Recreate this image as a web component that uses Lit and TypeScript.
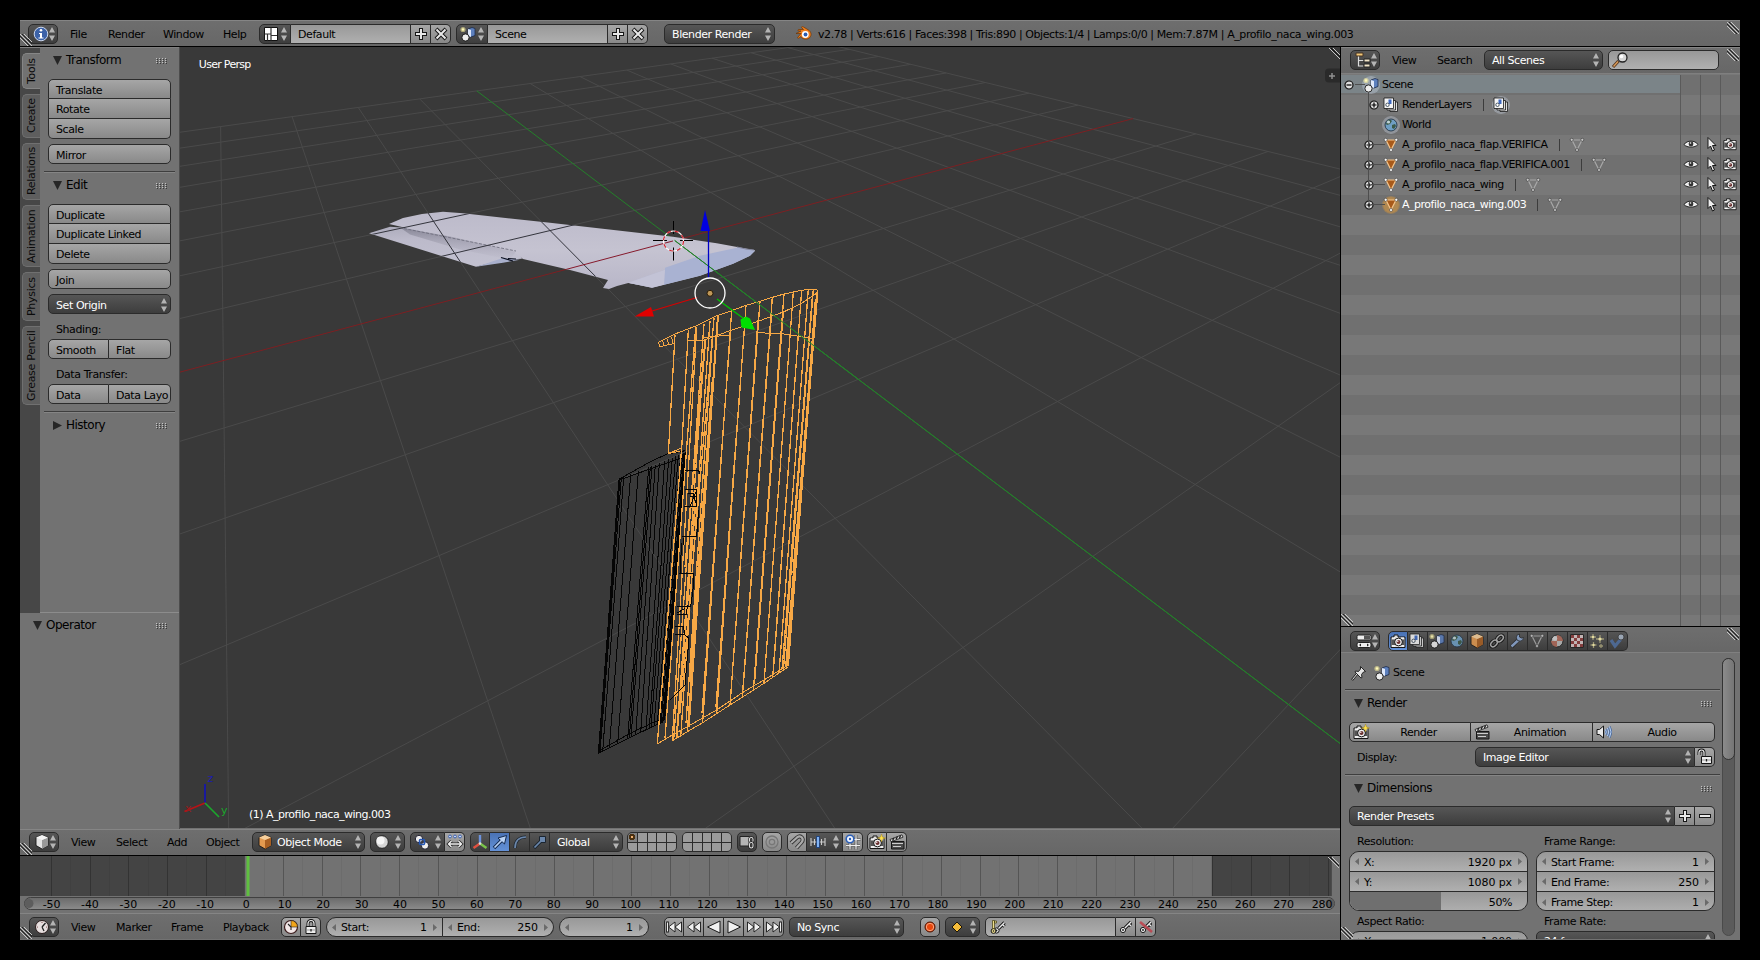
import { LitElement, html, svg, css, unsafeCSS, nothing } from "lit";
import { customElement } from "lit/decorators.js";
import { classMap } from "lit/directives/class-map.js";

/* ---------- icons, drawn on a 16 x 16 grid ---------- */
const K = "#161616";
const W = "#e8e8e8";
const camera = svg`<path d="M1 4h3V2h4v2h7v10.500H1z" fill="#e0e0e0" stroke=${K}/><path d="M1.500 6.500h13v5.500h-13z" fill="#555"/><circle cx="8.500" cy="9" r="3.900" fill="#f2f2f2" stroke=${K}/><circle cx="8.500" cy="9" r="2" fill="#6a3030"/><circle cx="7.800" cy="8.300" r=".7" fill="#fff"/><path d="M2 5h3M11 5h3M2 13h3M12 13h2" stroke="#fff"/>`;
const star = svg`<path d="M12.500 0l1 3 3 1-3 1-1 3-1-3-3-1 3-1z" fill="#ffe14a" stroke="#9a7a10" stroke-width=".4"/>`;
const clapper = svg`<path d="M2.500 7.500h12.500v7.500h-12.500z" fill="#4a4a4a" stroke=${K}/><path d="M1 5.500L13 .8l1 2.400L2 7.700z" fill="#ddd" stroke=${K} stroke-width=".8"/><path d="M3.500 6.500l1.500-2.500M7 5.200L8.500 2.500M10.500 4l1-2.500" stroke=${K} stroke-width="1.300"/><path d="M3 9.500h11M4 12.500h8" stroke="#ccc"/>`;
const sceneIcon = svg`<path d="M8 3l4-1.500 3 1v7l-4 1.500-3-1z" fill="#5d80bd" stroke="#1c2a48" stroke-width=".8"/><path d="M8 3l3 1v7l-3-1z" fill="#dfe8fa"/><circle cx="5.500" cy="11.500" r="3.600" fill="#eee" stroke=${K} stroke-width=".9"/><circle cx="3" cy="3.500" r="2.600" fill="#fff6a0" opacity=".55"/><circle cx="3" cy="3.500" r="1.200" fill="#fff9b8"/>`;
const layersIcon = svg`<path d="M6 5h8.500v9.500H7z" fill="#ddd" stroke=${K} stroke-width=".8"/><path d="M4 3.500h8.500v9.500H4z" fill="#ddd" stroke=${K} stroke-width=".8"/><path d="M1 1h9.500v10.500H1z" fill="#f4f4f4" stroke=${K} stroke-width=".8"/><path d="M5.500 2.500h3v4.500h-3z" fill="#3d68c0"/><circle cx="4.500" cy="7.800" r="1.700" fill="#fff" stroke="#234" stroke-width=".8"/>`;
const world = svg`<circle cx="8" cy="8" r="6" fill="#6f9fc4" stroke="#234" stroke-width=".9"/><path d="M4 4c2-2 4-1 5 0l-2 3-3 1-1-1zM9 8l3-1 1 2-2 3-2-1z" fill="#3c5a48"/><circle cx="5.500" cy="5" r="1.600" fill="#e4f2fb" opacity=".8"/>`;
const mesh = (fill: string, stroke: string, dot: string) => svg`<path d="M3 3h10L8 13z" fill=${fill} stroke=${stroke} stroke-width="1.200"/><g fill=${dot} stroke="#222" stroke-width=".5"><circle cx="2.700" cy="2.800" r="1.500"/><circle cx="13.300" cy="2.800" r="1.500"/><circle cx="8" cy="13" r="1.500"/></g>`;
const key = svg`<circle cx="5" cy="11" r="2.600" fill="#eee" stroke=${K}/><circle cx="5" cy="11" r=".9" fill=${K}/><path d="M7 9l6-6M11 5l2 2" stroke=${K} stroke-width="3.200"/><path d="M7 9l6-6M11 5l2 2" stroke="#eee" stroke-width="1.400"/>`;
const cube = (a: string, b: string, c: string) => svg`<path d="M8 1l6 2.500v8L8 15l-6-3.500v-8z" fill=${a} stroke=${K} stroke-width=".9"/><path d="M8 6l6-2.500v8L8 15z" fill=${b}/><path d="M8 1l6 2.500L8 6 2 3.500z" fill=${c}/>`;
const tri = (x: number, d: number) => svg`<path d=${d > 0 ? `M${x} 3l6.500 5-6.500 5z` : `M${x} 3l-6.500 5 6.500 5z`} fill="#f0f0f0" stroke=${K} stroke-width=".9"/>`;

const ICONS: Record<string, unknown> = {
  info: svg`<circle cx="8" cy="8" r="6.800" fill="#3c62a8" stroke="#cdd8ee" stroke-width="1"/><circle cx="8" cy="4.300" r="1.300" fill="#fff"/><path d="M6 7h3v4.500h1.500v1h-5v-1H7V8H6z" fill="#fff"/>`,
  layout: svg`<path d="M1.500 1.500h13v13h-13z" fill="#fff" stroke="#111"/><path d="M1.500 8h6M8 1.500v13M4.500 8v6.500M14 9.500h-6" stroke="#333" stroke-width="1.200"/>`,
  scene: sceneIcon,
  plus: svg`<path d="M8 2v12M2 8h12" stroke=${K} stroke-width="4"/><path d="M8 3v10M3 8h10" stroke=${W} stroke-width="2"/>`,
  minus: svg`<path d="M2 8h12" stroke=${K} stroke-width="4"/><path d="M3 8h10" stroke=${W} stroke-width="2"/>`,
  cross: svg`<path d="M3 3l10 10M13 3L3 13" stroke=${K} stroke-width="4"/><path d="M3.500 3.500l9 9M12.500 3.500l-9 9" stroke=${W} stroke-width="2"/>`,
  blender: svg`<path d="M1 7.500h5l-3 3.500c-1 1 0 1.500 1 1l2-1.500c1 3 7.500 4 9.500 0 1.500-3-.5-5.500-2-6.500L8.500 1C7 0 6 1 7 2l1.500 1.500H4c-1.500 0-1.500 1.500 0 1.500h2L1 7.500z" fill="#ee7d1a" stroke="#6b3404" stroke-width=".7"/><circle cx="10.300" cy="8.500" r="3.400" fill="#fff"/><circle cx="10.500" cy="8.500" r="1.900" fill="#2b5cb0"/>`,
  outliner: svg`<path d="M1 1h7v3H1z" fill="#f3c878" stroke="#432"/><path d="M3.500 4.500v9.500h5M3.500 8.500h5" fill="none" stroke="#ddd" stroke-width="1.200"/><path d="M9 7h6v3H9zM9 12h6v3H9z" fill="#f0e4c8" stroke="#222"/>`,
  lens: svg`<path d="M1 15l5.500-6" stroke="#53351d" stroke-width="3.200"/><path d="M1.500 14.500l4.500-5" stroke="#d99a5a" stroke-width="1.400"/><circle cx="10.500" cy="5.500" r="4.500" fill="#e4e4e4" fill-opacity=".8" stroke="#222" stroke-width="1.300"/><circle cx="9.500" cy="4.500" r="1.800" fill="#fff"/>`,
  layers: layersIcon,
  world,
  object: mesh("#a85a1a", "#f3c48a", "#fff"),
  mesh: mesh("none", "#a8a8a8", "#c8c8c8"),
  eye: svg`<path d="M1 8.500C4 4 12 4 15 8.500 12 12 4 12 1 8.500z" fill="#eee" stroke=${K} stroke-width=".9"/><circle cx="8" cy="8" r="2.400" fill="#333"/><circle cx="7.500" cy="7" r=".8" fill="#fff"/>`,
  pointer: svg`<path d="M5 1.500v11l2.500-2.500 2 5 2-1-2-4.500h3.500z" fill="#eee" stroke=${K}/>`,
  camera,
  camerastar: svg`${camera}${star}`,
  clapper,
  props: svg`<rect x="1" y="2" width="14" height="5" rx="1.500" fill="#eee" stroke="#222"/><path d="M8 2.500h6v4H8z" fill="#555"/><rect x="1" y="9.500" width="14" height="5" rx="1.500" fill="#eee" stroke="#222"/><path d="M5 10.500L3 12l2 1.500zM11 10.500l2 1.500-2 1.500z" fill="#222"/>`,
  cube: cube("#e39a50", "#a85f22", "#f6cf9c"),
  cubegrey: cube("#e4e4e4", "#999", "#f5f5f5"),
  chain: svg`<g fill="none" stroke="#111" stroke-width="3.400"><ellipse cx="5" cy="10.500" rx="3.800" ry="2.600" transform="rotate(-45 5 10.500)"/><ellipse cx="11" cy="5.500" rx="3.800" ry="2.600" transform="rotate(-45 11 5.500)"/></g><g fill="none" stroke="#b4b4b4" stroke-width="1.500"><ellipse cx="5" cy="10.500" rx="3.800" ry="2.600" transform="rotate(-45 5 10.500)"/><ellipse cx="11" cy="5.500" rx="3.800" ry="2.600" transform="rotate(-45 11 5.500)"/></g>`,
  wrench: svg`<path d="M2.500 14L9 7" stroke="#222" stroke-width="4"/><path d="M2.500 13.500L9.500 7" stroke="#8ba6d0" stroke-width="2.400"/><path d="M14.500 4.500a3.600 3.600 0 1 1-4-3.500v3l2 1z" fill="#8ba6d0" stroke="#222" stroke-width=".8"/>`,
  material: svg`<circle cx="8" cy="8" r="6" fill="#b9b9b9" stroke="#222"/><path d="M8 8V2a6 6 0 0 1 6 6zM8 8v6a6 6 0 0 1-6-6z" fill="#b06a5a"/><circle cx="6" cy="5.500" r="2.200" fill="#ddd" opacity=".8"/>`,
  texture: svg`<path d="M1.500 1.500h13v13h-13z" fill="#d6c8c8" stroke="#222"/><path d="M2 2h3v3H2zM8 2h3v3H8zM5 5h3v3H5zM11 5h3v3h-3zM2 8h3v3H2zM8 8h3v3H8zM5 11h3v3H5zM11 11h3v3h-3z" fill="#8e3c3c"/>`,
  particles: svg`<path d="M4 1v6M1 4h6M11 2v8M7 6h8M4.500 9v6M1.500 12h6M12 11v4M10 13h4" stroke="#a9a47c" stroke-width="1.300"/><circle cx="4" cy="4" r="1.300" fill="#fff4b0"/><circle cx="11" cy="6" r="1.600" fill="#fff4b0"/><circle cx="4.500" cy="12" r="1.200" fill="#fff4b0"/>`,
  physics: svg`<path d="M2 7l4 6 6-7" fill="none" stroke="#4f6f9f" stroke-width="3.200"/><circle cx="12" cy="4" r="3" fill="#a9b6c6" stroke="#333" stroke-width=".8"/>`,
  pin: svg`<path d="M1 15l5-6" stroke="#222" stroke-width="2.400"/><path d="M1.500 14.500L6 9" stroke="#eee"/><path d="M9.500 1.500l5 5-2 .5-2 2.500.5 3-1 .5-6-6 .5-1 3 .5L9.500 4z" fill="#e4e4e4" stroke=${K} stroke-width=".9"/>`,
  speaker: svg`<path d="M1 5.500h2.500l4-3.500v12l-4-3.500H1z" fill="#e8e8e8" stroke=${K}/><g fill="none" stroke="#3c5f98" stroke-width="2"><path d="M9.500 5.500q1.500 2.500 0 5M11.500 4q2.500 4 0 8M13.500 2.500q3 5.500 0 11"/></g><g fill="none" stroke="#c0d8f8" stroke-width="1"><path d="M9.500 5.500q1.500 2.500 0 5M11.500 4q2.500 4 0 8M13.500 2.500q3 5.500 0 11"/></g>`,
  unlock: svg`<path d="M2 6V3.500a2.500 2.500 0 0 1 5 0V8" fill="none" stroke=${K} stroke-width="3"/><path d="M2 6V3.500a2.500 2.500 0 0 1 5 0V8" fill="none" stroke="#eee" stroke-width="1.200"/><path d="M4.500 7.500h10v7h-10z" fill="#eee" stroke=${K}/><path d="M5 11h9" stroke="#999"/><path d="M9.500 10v2.500" stroke="#222" stroke-width="1.300"/>`,
  lock: svg`<path d="M5 8V4.500a3 3 0 0 1 6 0V8" fill="none" stroke=${K} stroke-width="3"/><path d="M5 8V4.500a3 3 0 0 1 6 0V8" fill="none" stroke="#eee" stroke-width="1.200"/><path d="M3 7.500h10v7H3z" fill="#eee" stroke=${K}/><path d="M3.500 11h9" stroke="#999"/><path d="M8 10v2.500" stroke="#222" stroke-width="1.300"/>`,
  sphere: svg`<circle cx="8" cy="8" r="6.300" fill="#d5d5d5" stroke="#1a1a1a" stroke-width=".9"/><circle cx="6.500" cy="6.500" r="4" fill="#f5f5f5"/>`,
  pivot: svg`<circle cx="5" cy="5" r="3.700" fill="#eee" stroke="#112" stroke-width=".9"/><circle cx="11" cy="11.500" r="3.700" fill="#eee" stroke="#112" stroke-width=".9"/><rect x="5.500" y="5.500" width="5" height="5" rx="1" fill="none" stroke="#2456b5" stroke-width="1.600"/>`,
  manip: svg`<path d="M1.500 10h13M4.500 7l-3 3 3 3M11.500 7l3 3-3 3" fill="none" stroke="#222" stroke-width="3"/><path d="M1.500 10h13M4.500 7l-3 3 3 3M11.500 7l3 3-3 3" fill="none" stroke="#f2f2f2" stroke-width="1.400"/><g fill="#dde6fa" stroke="#2a55ad" stroke-width=".9"><circle cx="3" cy="2.500" r="1.400"/><circle cx="8" cy="2.500" r="1.400"/><circle cx="13" cy="2.500" r="1.400"/></g>`,
  axes: svg`<path d="M8 9.500V1" stroke="#6d93dd" stroke-width="2.400"/><path d="M8 9.500L1.500 14" stroke="#e05040" stroke-width="2.400"/><path d="M8 9.500l6.500 4.500" stroke="#7ac44a" stroke-width="2.400"/><circle cx="8" cy="9.500" r="1.300" fill="#ddd"/>`,
  arrow: svg`<path d="M2 14l7-7" stroke="#12284e" stroke-width="3.600"/><path d="M14.500 1.500l-2 8.500L6 4z" fill="#b9d2f5" stroke="#12284e"/><path d="M2.500 13.500L10 6" stroke="#b9d2f5" stroke-width="1.700"/>`,
  arc: svg`<path d="M3 14C3 7 7 3 14 3" fill="none" stroke="#1c2530" stroke-width="3.200"/><path d="M3 14C3 7 7 3 14 3" fill="none" stroke="#6b87ab" stroke-width="1.700"/>`,
  scale: svg`<path d="M2 14l7-7" stroke="#1c2530" stroke-width="3.400"/><path d="M7.500 2.500h6v6h-6z" fill="#6b87ab" stroke="#1c2530"/><path d="M2.500 13.500L9 7" stroke="#6b87ab" stroke-width="1.700"/>`,
  layerlock: svg`<path d="M1 2.500h9.500v9.500H1z" fill="#b4b4b4" stroke="#222"/><rect x="10.500" y="3.500" width="3.500" height="5" rx="1.700" fill="none" stroke="#222" stroke-width="2.400"/><rect x="10.500" y="3.500" width="3.500" height="5" rx="1.700" fill="none" stroke="#ddd" stroke-width="1.100"/><rect x="10.500" y="8.500" width="3.500" height="5.500" rx="1.700" fill="none" stroke="#222" stroke-width="2.400"/><rect x="10.500" y="8.500" width="3.500" height="5.500" rx="1.700" fill="none" stroke="#ddd" stroke-width="1.100"/>`,
  prop: svg`<circle cx="8" cy="8" r="6" fill="none" stroke="#777" stroke-width="1.300"/><circle cx="8" cy="8" r="2.700" fill="#999" stroke="#777" stroke-width="1.200"/>`,
  magnet: svg`<path d="M2 9l6-5.500c4-3 7.500 1.500 4.500 5L7.500 14" fill="none" stroke="#333" stroke-width="4"/><path d="M2 9l6-5.500c4-3 7.500 1.500 4.500 5L7.500 14" fill="none" stroke="#aaa" stroke-width="2.200"/>`,
  snapinc: svg`<path d="M1 4v8M4.500 5v6M11.500 5v6M15 4v8M1 8h14" stroke="#ccc" stroke-width="1.100"/><path d="M8 2v12" stroke="#1d4585" stroke-width="3.600"/><path d="M8 3v10" stroke="#8fc0ff" stroke-width="1.800"/>`,
  snaptarget: svg`<path d="M1 11.500h14M5 8v7.500M11 1v14.500M8 5.500h7.500" stroke="#333" stroke-width="2.600"/><path d="M1 11.500h14M5 8v7.500M11 1v14.500M8 5.500h7.500" stroke="#eee" stroke-width="1.300"/><circle cx="5" cy="5" r="3.800" fill="#f5f8ff" stroke="#2b5fb8" stroke-width="1.600"/><circle cx="5" cy="5" r="1.200" fill="#2b5fb8"/>`,
  clock: svg`<circle cx="8" cy="8" r="6.500" fill="#e6dede" stroke="#2a1c1c"/><path d="M8 8l3.500-4M8 8l2 4" stroke="#222" stroke-width="1.300"/><g fill="#744"><circle cx="3.500" cy="8" r=".6"/><circle cx="8" cy="3.500" r=".6"/><circle cx="12.500" cy="8" r=".6"/></g>`,
  clockpie: svg`<circle cx="8" cy="8" r="6.500" fill="#f2e6e6" stroke="#3a1c1c" stroke-width="1.200"/><path d="M8 8V1.500A6.500 6.500 0 0 1 14.500 8z" fill="#f2a51a" stroke="#222" stroke-width=".6"/><path d="M8 8l-3-3M8 8v3" stroke="#222" stroke-width="1.100"/>`,
  first: svg`<path d="M1.500 2.500v11" stroke=${K} stroke-width="2.600"/><path d="M1.500 3.500v9" stroke="#eee"/>${tri(9, -1)}${tri(15.5, -1)}`,
  prev: svg`${tri(8, -1)}${tri(14.5, -1)}`,
  back: svg`<path d="M14 2v12L1.500 8z" fill="#f0f0f0" stroke=${K}/>`,
  play: svg`<path d="M2 2v12l12.500-6z" fill="#f0f0f0" stroke=${K}/>`,
  next: svg`${tri(1.5, 1)}${tri(8, 1)}`,
  last: svg`<path d="M14.500 2.500v11" stroke=${K} stroke-width="2.600"/><path d="M14.500 3.500v9" stroke="#eee"/>${tri(0.5, 1)}${tri(7, 1)}`,
  record: svg`<circle cx="8" cy="8" r="5" fill="#d83c0c" stroke="#4a1404"/><circle cx="8" cy="8" r="3.700" fill="#e8480f" stroke="#ffb08a" stroke-width=".9"/>`,
  diamond: svg`<path d="M8 3L13 8 8 13 3 8z" fill="#f6bd3a" stroke="#1c1404"/>`,
  key,
  keyset: svg`<g transform="translate(2.500 .5)">${key}</g><circle cx="4.500" cy="12" r="2.400" fill="#efe08c" stroke=${K}/><path d="M3.500 1.500h2v8h-2zM5.500 2h2v2h-2z" fill="#efe08c" stroke="#443c10" stroke-width=".7"/><circle cx="4.500" cy="12" r=".8" fill=${K}/>`,
  keydel: svg`${key}<path d="M2 3l12 10" stroke="#c0404a" stroke-width="2.600" opacity=".85"/>`,
};
const icon = (name: string, cls = "") => html`<svg class="ic ${cls}" viewBox="0 0 16 16">${ICONS[name]}</svg>`;

/* ---------- shared styles ---------- */
const sizes = unsafeCSS(
  Array.from({ length: 480 }, (_, i) => `.w${i}{width:${i}px;flex:none}` + (i < 60 ? `.ml${i}{margin-left:${i}px}` : "")).join("")
);

const base = css`
  ${sizes}
  * { box-sizing: border-box; }
  .row { display: flex; }
  .ic { width: 16px; height: 16px; flex: none; display: block; overflow: visible; fill: none; }
  .b, .d, .f {
    height: 20px; border: 1px solid #2b2b2b; border-radius: 5px; display: flex; align-items: center;
    line-height: 16px; padding-top: 2px; overflow: hidden; white-space: nowrap;
  }
  .b > svg, .d > svg, .f > svg { margin-top: -2px; }
  .b { background: linear-gradient(#a6a6a6, #898989); color: #000; }
  .d { background: linear-gradient(#565656, #3d3d3d); color: #fff; }
  .f { background: linear-gradient(#989898, #b0b0b0); color: #000; }
  .c { justify-content: center; }
  .l { border-top-right-radius: 0; border-bottom-right-radius: 0; }
  .m { border-radius: 0; border-left-width: 0; }
  .r { border-top-left-radius: 0; border-bottom-left-radius: 0; border-left-width: 0; }
  .sel { background: linear-gradient(#4a72b4, #6391d8); }
  .ud { width: 6px; height: 14px; margin: 0 3px 0 auto; flex: none; fill: #b4b4b4; }
  .n { border-radius: 10px; padding: 2px 5px 0; }
  .n.l { border-radius: 10px 0 0 10px; }
  .n.r { border-radius: 0 10px 10px 0; }
  .n .v { margin-left: auto; margin-right: 6px; letter-spacing: -.1px; }
  .n .t { margin-left: 5px; }
  .ar { width: 4px; height: 7px; fill: #6a6a6a; flex: none; }
  .txt { padding-left: 7px; }
`;

const updown = () => html`<svg class="ud" viewBox="0 0 6 14"><path d="M3 0l3 5.500H0zM3 14l3-5.500H0z"/></svg>`;
const grip = () => html`<svg class="grip" width="12" height="7"><g fill="#c4c4c4">${[0, 3, 6, 9].map((x) => [0, 2, 4].map((y) => svg`<rect x=${x} y=${y} width="1" height="1"/>`))}</g><g fill="#3a3a3a">${[0, 3, 6, 9].map((x) => [0, 2, 4].map((y) => svg`<rect x=${x + 1} y=${y + 1} width="1" height="1"/>`))}</g></svg>`;
const num = (label: string, value: string, cls: string) => html`<div class="f n ${cls}">
  <svg class="ar" viewBox="0 0 4 7"><path d="M4 0v7L0 3.500z"/></svg><span class="t">${label}</span><span class="v">${value}</span>
  <svg class="ar" viewBox="0 0 4 7"><path d="M0 0v7l4-3.500z"/></svg></div>`;
const hatch = (cls: string) => html`<svg class="hatch ${cls}" width="12" height="12"><path d="M0 0L12 12M0 4L8 12M4 0L12 8" stroke="#c8c8c8"/><path d="M0 2L10 12M2 0L12 10" stroke="#222"/></svg>`;

/* ---------- 3D viewport ---------- */
type P = [number, number];
/* [grid u, grid v, screen x, screen y] samples the floor projection is fitted to */
const SAMPLES = [
  [0, 0, 673, 240.7], [8, 0, 1132.5, 117.7], [-4, 0, 222.5, 359.5], [-4, -8, 220.5, 127], [0, -8, 476.7, 91],
  [6, 3, 1269.9, 206.7], [3, 3, 1106.9, 275], [0, 3, 858.6, 380], [8, 2, 1268, 151.7], [1, 3, 954.9, 340],
  [-1, 0, 582.5, 265], [-2, 0, 482.2, 291.7], [-3, 0, 362.4, 323.3], [6, -8, 751.5, 52.7], [-4, 1, 223.5, 428.3],
  [-4, 2, 225.5, 517], [-4, 3, 227, 645],
];
function fit(): number[] {
  const A = Array.from({ length: 8 }, () => new Array(9).fill(0));
  const add = (r: number[], b: number) => {
    for (let i = 0; i < 8; i++) { for (let j = 0; j < 8; j++) A[i][j] += r[i] * r[j]; A[i][8] += r[i] * b; }
  };
  for (const [u, v, sx, sy] of SAMPLES) {
    const x = sx / 1000, y = sy / 1000;
    add([u, v, 1, 0, 0, 0, -u * x, -v * x], x);
    add([0, 0, 0, u, v, 1, -u * y, -v * y], y);
  }
  for (let i = 0; i < 8; i++) {
    let p = i;
    for (let k = i; k < 8; k++) if (Math.abs(A[k][i]) > Math.abs(A[p][i])) p = k;
    [A[i], A[p]] = [A[p], A[i]];
    for (let k = 0; k < 8; k++) {
      if (k === i) continue;
      const q = A[k][i] / A[i][i];
      for (let j = i; j < 9; j++) A[k][j] -= q * A[i][j];
    }
  }
  return A.map((r, i) => r[8] / r[i]);
}
const H = fit();
const depth = (u: number, v: number) => H[6] * u + H[7] * v + 1;
const project = (u: number, v: number): P => {
  const w = depth(u, v);
  return [((H[0] * u + H[1] * v + H[2]) / w) * 1000, ((H[3] * u + H[4] * v + H[5]) / w) * 1000];
};
function gridLine(a: P, b: P, cls: string) {
  const da = depth(...a), db = depth(...b), eps = 0.06;
  if (da < eps && db < eps) return nothing;
  const cut = (p: P, q: P, dp: number, dq: number): P => {
    if (dp >= eps) return p;
    const t = (eps - dp) / (dq - dp);
    return [p[0] + (q[0] - p[0]) * t, p[1] + (q[1] - p[1]) * t];
  };
  const [x1, y1] = project(...cut(a, b, da, db));
  const [x2, y2] = project(...cut(b, a, db, da));
  return svg`<line class=${cls} x1=${x1} y1=${y1} x2=${x2} y2=${y2}/>`;
}
const N = 8;
const range = (a: number, b: number) => Array.from({ length: b - a + 1 }, (_, i) => a + i);
const lines = (xs: number[][]) => xs.map(([a, b, c, d]) => `M${a} ${b}L${c} ${d}`).join("");

/* ribs of the selected wing: top x, top y, bottom x, bottom y */
const RIBS = [
  [285, 165, 265, 520], [325, 150, 305, 505], [305, 505, 232, 1390], [347, 142, 255, 1375], [350, 142, 277, 1380], [372, 132, 281, 1378],
  [375, 180, 290, 1376], [390, 122, 302, 1370], [402, 114, 300, 1300], [413, 106, 322, 1355], [415, 106, 327, 1340], [398, 170, 318, 1330],
  [455, 92, 368, 1325], [452, 150, 366, 1300], [498, 76, 410, 1300], [494, 136, 408, 1280], [540, 64, 450, 1275], [534, 120, 452, 1250],
  [577, 52, 487, 1250], [574, 110, 489, 1228], [612, 42, 520, 1232], [610, 96, 524, 1205], [640, 36, 552, 1210], [665, 31, 578, 1192],
  [662, 70, 580, 1175], [685, 28, 597, 1180], [700, 28, 610, 1172], [697, 50, 606, 1168], [712, 30, 620, 1162], [712, 30, 625, 1158], [706, 60, 622, 1150],
  [710, 40, 617, 1160], [702, 170, 626, 1130],
];
const FLAP_TOP = [118, 124, 131, 152, 175, 206, 211, 216, 226, 238, 254, 266, 277, 287, 295, 302, 308, 312, 316, 318];
const FLAP_BOT = [55, 60, 68, 88, 113, 143, 148, 153, 167, 182, 198, 208, 213, 222, 232, 240, 244, 248, 251, 254];

@customElement("view-port")
export class ViewPort extends LitElement {
  static styles = css`
    :host { display: block; width: 1161px; height: 781px; background: #393939; overflow: hidden; }
    svg { display: block; font: 11px "DejaVu Sans", sans-serif; letter-spacing: 0; }
    .g { stroke: #4a4a4a; }
    .x { stroke: #7d1f22; }
    .y { stroke: #24802a; }
    .over .g { stroke: #33343c; stroke-width: 1; }
    .over .x { stroke: #861a2c; }
    .wire { fill: none; shape-rendering: crispEdges; }
    .wire path { vector-effect: non-scaling-stroke; }
    .sel { stroke: #f7a845; }
    .rib { stroke-width: 1.3; }
    .blk { stroke: #050505; }
  `;
  render() {
    return html`<svg width="1161" height="781" viewBox="180 47 1161 781">
      <defs>
        <clipPath id="wing"><path d="M369 233l21-9 32-10 22-3 106 11 123 14v30l-64 14-39-10-47-10-47 7z"/></clipPath>
        <linearGradient id="skin" x1="0" y1="0" x2="0" y2="1"><stop offset="0" stop-color="#bcbaca"/><stop offset=".5" stop-color="#c5c3d1"/><stop offset="1" stop-color="#b8b6c8"/></linearGradient>
        <linearGradient id="flap" x1="0" y1="0" x2=".2" y2="1"><stop offset="0" stop-color="#acabbb"/><stop offset=".35" stop-color="#bcbaca"/><stop offset="1" stop-color="#c2c1d0"/></linearGradient>
        <linearGradient id="gap" x1="0" y1="0" x2="-.15" y2="1"><stop offset="0" stop-color="#7f7e8e"/><stop offset="1" stop-color="#bcbaca" stop-opacity="0"/></linearGradient>
      </defs>
      ${range(-N, N).filter((i) => i !== 0).map((i) => [gridLine([i, -N], [i, N], "g"), gridLine([-N, i], [N, i], "g")])}
      ${gridLine([-N, 0], [N, 0], "x")}${gridLine([0, -N], [0, N], "y")}

      <path d="M369 233.300l21-6.500 30 2 98 24 4 6-19 1-27 7z" fill="url(#flap)"/>
      <path d="M476 266.700l8-2.500 18-6 18 1.500-17 3z" fill="#a9b0cc"/>
      <path d="M389 224l14-6 19-4 21-2.300 20 1.600 87 9.400 123 14 43.700 6.600 38.300 7-5 5-17 8-33 12-48 12-23.700-4.400-11.300 3-8 3-6-1 5-8-38-10-47-11-8-6-60-14-40-9z" fill="url(#skin)"/>
      <path d="M400 227.500l50 9 66 15-6 8-50-10-50-15z" fill="url(#gap)" opacity=".8"/>
      <path d="M404 228.500l50 10 62 12.500" stroke="#6a6a78" stroke-width=".8" stroke-dasharray="3 1.500" fill="none"/>
      <path d="M738 247.500l17 3.200-5 5-17 8-33 12-48 12-24-5 40-14z" fill="#b3b5cd"/>
      <path d="M738 247.500l17 3.200-5 5-17 8-33 12-36 9 1-17 35-12z" fill="#a9b2d2"/>
      <path d="M628 282.800l24 5 12-3 1-15z" fill="#c3c3d6"/>
      <path d="M501 257.500l12 3.500M508 258.500l8 .5" stroke="#0b1020" stroke-width="1.200"/>
      <path d="M737 247l9 2 8 1" stroke="#80839a" fill="none"/>
      <g class="over" clip-path="url(#wing)">
        ${[-4, -3, -2, -1].map((i) => [gridLine([i, -N], [i, N], "g"), gridLine([-N, i], [N, i], "g")])}
        ${gridLine([-N, 0], [0, 0], "x")}
      </g>
      ${gridLine([0, 0], [0, 3], "y")}

      <g class="wire" transform="translate(580 280) scale(.33333)">
        <path class="blk" d=${lines(FLAP_TOP.map((x, i) => [x, 597 - (x - 118) * 0.4, FLAP_BOT[i], 1420 - (FLAP_BOT[i] - 55) * 0.5]))}/>
        <path class="blk" stroke-width="2" d="M313 520L252 1320M118 600L58 1415"/>
        <path class="blk" d="M118 597L215 543 262 522 316 512M118 600L215 565 316 530M55 1420L150 1372 250 1325M58 1412L150 1360 254 1312"/>
        <path class="sel rib" d=${lines(RIBS)}/>
        <path class="sel" stroke-width="2" d="M707 90L640 880M376 180L316 860M398 300L330 1200M350 620L290 1370M712 40L668 560"/>
        <path class="sel" d="M235 187L285 162 347 138 413 106 455 92 498 76 540 64 577 52 612 42 640 36 665 31 685 28 712 28M235 187L240 200 285 190M248 183l4 14M262 177l4 16M275 170l3 20"/>
        <path class="sel" d="M325 182L372 180 415 165 455 150 540 122 612 95 665 70 712 38M372 172L452 165M535 158L612 162 702 176M265 522L305 503M265 518L300 515"/>
        <path class="sel" d="M232 1392L277 1365 322 1340 410 1290 487 1238 560 1195 625 1155M277 1382L368 1328 450 1275 552 1210 625 1160"/>
        <path class="blk" d="M316 572h40l4 10M316 628h35v52h-38M325 640h15l8 30M330 680l20-50M356 690l-6 80h-45M310 775v20M305 790l-5 90h40v40M340 920l-8 60h-40M290 1005h28l5-30M285 1040h25l5 25h-30M315 1065l12 10-12 140-45 45M330 650h20M290 1000l25-15"/>
      </g>

      ${gridLine([0, 0], [0, N], "y")}

      <path d="M673.500 221v13M673.500 247.500v13M653 240.500h14M680 240.500h13" stroke="#000"/>
      <circle cx="673.500" cy="241" r="10" fill="none" stroke="#fff" stroke-width="1.200"/>
      <circle cx="673.500" cy="241" r="10" fill="none" stroke="#d0202c" stroke-width="1.200" stroke-dasharray="4 4"/>

      <path d="M708.500 278V230" stroke="#0000c8" stroke-width="1.300"/>
      <path d="M705 210l5 21h-9.500z" fill="#0000e0"/>
      <path d="M697 297.500L652 311" stroke="#d80000" stroke-width="1.300"/><path d="M634.500 316.500l16.500-9.500 3 9.500z" fill="#e00000"/>
      <path d="M717 299l30 22" stroke="#00c400" stroke-width="1.300"/><path d="M755 330l-13.500-2.500-1-8 5.500-3 4 2z" fill="#00e000"/>
      <circle cx="710" cy="293" r="15" fill="none" stroke="#fff" stroke-width="1.300"/>
      <circle cx="710" cy="293.300" r="3" fill="#c09858" stroke="#2a1c08"/>

      <path d="M205 803V784" stroke="#1212b8" stroke-width="1.600"/><path d="M205 803l-20.500 8.500" stroke="#b81216" stroke-width="1.800"/><path d="M205 803l14 14" stroke="#1aa82c" stroke-width="1.600"/>
      <text x="207.500" y="782" fill="#1c1cb0">z</text><text x="185" y="812" fill="#9c1a1c">x</text><text x="221" y="814" fill="#1aa82c">y</text>

      <text x="198.800" y="68" fill="#fff" textLength="52.500">User Persp</text>
      <text x="249" y="818" fill="#fff" textLength="142">(1) A_profilo_naca_wing.003</text>
      <rect x="1325" y="68.500" width="18" height="14" rx="4" fill="#2a2a2a"/><path d="M1332 73v6M1329 76h6" stroke="#909090" stroke-width="1.500"/>
      <path d="M1329 48l11 11M1333 48l7 7" stroke="#c8c8c8"/><path d="M1331 48l9 9" stroke="#111"/>
    </svg>`;
  }
}

/* ---------- application shell ---------- */
@customElement("app-root")
export class AppRoot extends LitElement {
  static styles = [base, css`
    :host { display: block; width: 1760px; height: 960px; background: #000; padding: 20px; box-sizing: border-box; overflow: hidden;
      font: 11px "DejaVu Sans", "Liberation Sans", sans-serif; letter-spacing: -.42px; color: #000; }
    .win { width: 1720px; height: 920px; display: flex; flex-direction: column; background: #727272; overflow: hidden; }
    .bar { display: flex; height: 26px; flex: none; padding: 2px 0 0; background: linear-gradient(#6e6e6e, #676767); border-top: 1px solid #858585; line-height: 22px; white-space: nowrap; position: relative; }
    .info { height: 27px; border-bottom: 1px solid #000; }
    .info, .low { padding-top: 3px; }
    .stats { letter-spacing: -.41px; }
    .bar .row { padding-top: 2px; }
    .split { display: flex; height: 893px; }
    .left { width: 1320px; flex: none; }
    .right { flex: 1; border-left: 1px solid #000; min-width: 0; display: flex; flex-direction: column; overflow: hidden; }
    .stage { display: flex; height: 782px; }
    .side { width: 160px; border-right: 1px solid #4c4c4c; flex: none; background: #727272; }
    .tools { display: flex; height: 566px; border-top: 1px solid #7f7f7f; }
    .tabs { width: 20px; background: #474747; padding: 5px 0 0 2px; display: flex; flex-direction: column; gap: 5px; }
    .tab { writing-mode: vertical-rl; transform: rotate(180deg); background: #5e5e5e; border: 1px solid #707070; border-left: 0; border-radius: 0 5px 5px 0;
      display: flex; align-items: center; justify-content: center; line-height: 16px; padding-right: 1px; color: #0a0a0a; flex: none; letter-spacing: -.3px; }
    .tab.on { background: #727272; border-color: #868686; }
    .t1 { height: 36px; } .t2 { height: 44px; } .t3 { height: 57px; } .t4 { height: 62px; } .t5 { height: 49px; } .t6 { height: 79px; }
    .panel { flex: 1; padding: 0 8px; }
    .panel .b, .panel .d { padding-top: 3px; }
    .hd { display: flex; align-items: center; height: 24px; font-size: 12px; letter-spacing: -.5px; }
    .hd .tr { width: 9px; height: 9px; margin: 0 4px 0 5px; fill: #262626; }
    .grip { margin: 2px 3px 0 auto; display: block; }
    .col { display: flex; flex-direction: column; }
    .col .b, .col .d { width: 123px; }
    .st > * { border-radius: 0; }
    .st > * + * { border-top: 0; }
    .st > :first-child { border-top-left-radius: 5px; border-top-right-radius: 5px; }
    .st > :last-child { border-bottom-left-radius: 5px; border-bottom-right-radius: 5px; }
    .gap5 { margin-top: 5px; }
    .gap6 { margin-top: 6px; }
    .lab { padding-left: 8px; height: 20px; line-height: 22px; }
    .sep { height: 2px; border-top: 1px solid #3e3e3e; border-bottom: 1px solid #858585; margin: 7px -4px 0; }
    .op { border-top: 1px solid #8c8c8c; padding: 0 8px 0 8px; margin-top: -1px; }
    .sp { margin-top: 7px; }
    .hatch { position: absolute; }
    .bl { left: 0; bottom: 0; } .tr0 { right: 1px; top: 1px; }
    .layers { display: grid; grid-template: 9px 8px / repeat(5, 1fr); width: 50px; height: 20px; gap: 1px; background: #2b2b2b; border: 1px solid #2b2b2b; border-radius: 5px; overflow: hidden; }
    .layers i { background: #9b9b9b; }
    .layers i.on { background: radial-gradient(circle at 4px 4px, #f0b070 0 1.500px, #4a3010 1.500px 3px, #828282 3px); }
    .time { height: 41px; border-top: 1px solid #000; background: #727272; }
    .time svg { display: block; }
    .ruler { height: 17px; background: #727272; padding: 1px 5px 0 4px; letter-spacing: -.1px; }
    .rl { height: 13px; border: 1px solid #404040; border-radius: 7px; background: linear-gradient(#6b6b6b, #8a8a8a); }
    .rl svg { display: block; overflow: visible; }
    .tree { height: 553px; position: relative; background: repeating-linear-gradient(#707070 0 20px, #787878 20px 40px); background-position: 0 1px; border-top: 1px solid #7f7f7f; padding-top: 1px; display: flex; }
    .rows { width: 339px; flex: none; }
    .tn { height: 20px; display: flex; align-items: center; line-height: 20px; white-space: nowrap; letter-spacing: -.5px; }
    .tn .ic, .pm { margin-top: -1px; }
    .tn.root { background: linear-gradient(#7b8488 18px, transparent 18px); }
    .pm { width: 10px; height: 10px; flex: none; }
    .halo { border-radius: 50%; box-shadow: 0 0 0 1px rgba(200, 210, 225, .4); background: rgba(200, 210, 225, .4); }
    .glow { border-radius: 50%; background: rgba(240, 160, 50, .5); box-shadow: 0 0 0 1px rgba(240, 160, 50, .3); }
    .bar1 { width: 1px; height: 12px; background: #3c3c3c; flex: none; margin-left: 11px; }
    .hl { color: #fff; }
    .cols { flex: 1; display: grid; grid-template-columns: 20px 20px 20px; grid-auto-rows: 20px; padding-top: 60px; background: linear-gradient(90deg, #5a5a5a 1px, transparent 1px 20px, #5a5a5a 20px 21px, transparent 21px 40px, #5a5a5a 40px 41px, transparent 41px); }
    .cols .ic { margin: 1px 0 0 3px; }
    .cols .ic:nth-child(3n) { margin: 2px 0 0 3px; width: 14px; height: 14px; }
    .trunk { position: absolute; left: 0; top: 0; }
    .phead { border-top: 1px solid #000; height: 27px; border-bottom: 1px solid #808080; padding-top: 4px; }
    .phead .d { padding-left: 1px; }
    .props { display: flex; height: 286px; overflow: hidden; position: relative; }
    .pc { width: 377px; padding: 5px 2px 0 8px; flex: none; }
    .pc .hd { height: 24px; }
    .pin { height: 29px; display: flex; align-items: center; }
    .nogap { margin-top: 2px; }
    .gap7 { margin-top: 7px; }
    .gap4 { margin-top: 5px; }
    .dim .ic { opacity: .85; }
    .f.slider { background: linear-gradient(90deg, #6f6f6f 0 91px, transparent 91px), linear-gradient(#989898, #b0b0b0); justify-content: flex-end; padding-right: 15px; }
    .nums { border-radius: 10px; overflow: hidden; border: 1px solid #2b2b2b; height: 60px; }
    .nums .n { border-radius: 0; border-width: 0 0 1px; height: 20px; }
    .nums .n:last-child { border-bottom: 0; }
    .sb { width: 13px; height: 278px; margin: 5px 0 0 4px; border-radius: 7px; background: #5b5b5b; border: 1px solid #4a4a4a; }
    .th { height: 102px; width: 13px; margin: -1px; border-radius: 7px; border: 1px solid #333; background: linear-gradient(90deg, #8b8b8b, #757575); }
    .two { display: flex; gap: 8px; }
    .tt { margin-left: auto; margin-right: auto; padding-right: 2px; }
  `];

  private sel(name: string, cls: string) {
    return html`<div class="d w30 ${cls}"><span class="ml4"></span>${icon(name)}${updown()}</div>`;
  }
  private header(t: string, open = true) {
    return html`<div class="hd"><svg class="tr" viewBox="0 0 9 9"><path d=${open ? "M0 0h9L4.500 9z" : "M0 0v9l9-4.500z"}/></svg>${t}${grip()}</div>`;
  }
  private node(label: string, hl = false) {
    return html`<div class="tn"><span class="w23"></span>${this.pm(true)}<span class="w9"></span>${icon("object", hl ? "glow" : "")}<span class=${classMap({ ml3: true, hl })}>${label}</span><span class="bar1"></span><span class="w9"></span>${icon("mesh")}</div>`;
  }
  private pm(plus: boolean) {
    return html`<svg class="pm" viewBox="0 0 10 10"><circle cx="5" cy="5" r="4" fill="#ddd" stroke="#111" stroke-width="1.200"/><path d=${plus ? "M2.500 5h5M5 2.500v5" : "M2.500 5h5"} stroke="#000" stroke-width="1.200"/></svg>`;
  }

  render() {
    const fx = (f: number) => 224.3 + f * 3.87;
    return html`<div class="win">
      <div class="bar info">
        ${hatch("bl")}${this.sel("info", "ml8")}
        <span class="ml12 w38">File</span><span class="w55">Render</span><span class="w60">Window</span><span class="w36">Help</span>
        <div class="d l w32"><span class="ml3"></span>${icon("layout")}${updown()}</div><div class="f m w120 txt">Default</div><div class="b m w20 c">${icon("plus")}</div><div class="b r w20 c">${icon("cross")}</div>
        <div class="d l w32 ml5"><span class="ml3"></span>${icon("scene")}${updown()}</div><div class="f m w120 txt">Scene</div><div class="b m w20 c">${icon("plus")}</div><div class="b r w20 c">${icon("cross")}</div>
        <div class="d w111 ml16 txt">Blender Render${updown()}</div>
        <span class="ml20"></span><span class="row w23">${icon("blender")}</span><span class="stats">v2.78 | Verts:616 | Faces:398 | Tris:890 | Objects:1/4 | Lamps:0/0 | Mem:7.87M | A_profilo_naca_wing.003</span>
        ${hatch("tr0")}
      </div>
      <div class="split">
        <div class="left">
          <div class="stage">
            <div class="side">
              <div class="tools">
                <div class="tabs">
                  <div class="tab on t1">Tools</div><div class="tab t2">Create</div><div class="tab t3">Relations</div><div class="tab t4">Animation</div><div class="tab t5">Physics</div><div class="tab t6">Grease Pencil</div>
                </div>
                <div class="panel">
                  ${this.header("Transform")}
                  <div class="col st sp"><div class="b txt">Translate</div><div class="b txt">Rotate</div><div class="b txt">Scale</div></div>
                  <div class="col gap5"><div class="b txt">Mirror</div></div>
                  <div class="sep"></div>
                  ${this.header("Edit")}
                  <div class="col st sp"><div class="b txt">Duplicate</div><div class="b txt">Duplicate Linked</div><div class="b txt">Delete</div></div>
                  <div class="col gap5"><div class="b txt">Join</div></div>
                  <div class="col gap5"><div class="d txt">Set Origin${updown()}</div></div>
                  <div class="gap5 lab">Shading:</div>
                  <div class="row"><div class="b l w61 txt">Smooth</div><div class="b r w62 txt">Flat</div></div>
                  <div class="gap5 lab">Data Transfer:</div>
                  <div class="row"><div class="b l w61 txt">Data</div><div class="b r w62 txt">Data Layo</div></div>
                  <div class="sep"></div>
                  ${this.header("History", false)}
                </div>
              </div>
              <div class="op">${this.header("Operator")}</div>
            </div>
            <view-port></view-port>
          </div>
          <div class="bar">
            ${hatch("bl")}${this.sel("cubegrey", "ml9")}
            <span class="ml12 w45">View</span><span class="w51">Select</span><span class="w39">Add</span><span class="w46">Object</span>
            <div class="d w113"><span class="ml4"></span>${icon("cube")}<span class="ml4">Object Mode</span>${updown()}</div>
            <div class="d w35 ml5"><span class="ml3"></span>${icon("sphere")}${updown()}</div>
            <div class="d l w35 ml5"><span class="ml3"></span>${icon("pivot")}${updown()}</div><div class="b r w20 c">${icon("manip")}</div>
            <div class="d l w20 ml5 c">${icon("axes")}</div><div class="d m w20 c sel">${icon("arrow")}</div><div class="d m w20 c">${icon("arc")}</div><div class="d m w20 c">${icon("scale")}</div><div class="d r w73 txt">Global${updown()}</div>
            <div class="layers ml4">${range(0, 9).map((i) => html`<i class=${i ? "" : "on"}></i>`)}</div>
            <div class="layers ml5">${range(0, 9).map(() => html`<i></i>`)}</div>
            <div class="d w20 ml5 c">${icon("layerlock")}</div>
            <div class="b w20 ml5 c">${icon("prop")}</div>
            <div class="b l w20 ml5 c">${icon("magnet")}</div><div class="d m w36"><span class="ml3"></span>${icon("snapinc")}${updown()}</div><div class="b r w20 c">${icon("snaptarget")}</div>
            <div class="b l w20 ml4 c">${icon("camerastar")}</div><div class="b r w20 c">${icon("clapper")}</div>
          </div>
          <div class="time"><svg width="1320" height="40">
            <rect width=${fx(0)} height="40" fill="#444"/><rect x=${fx(250)} width="120" height="40" fill="#444"/>
            ${range(-5, 28).map((i) => svg`<rect x=${Math.round(fx(i * 10))} width="1" height="40" fill="#000" opacity=".25"/><rect x=${Math.round(fx(i * 10 + 5))} width="1" height="40" fill="#000" opacity=".05"/>`)}
            <rect x="226.500" width="3" height="40" fill="#5fbf40"/>
            <path d="M1308 1l11 11M1312 1l7 7" stroke="#c8c8c8"/><path d="M1310 1l9 9" stroke="#111"/></svg></div>
          <div class="ruler"><div class="rl"><svg width="1309" height="11"><circle cx="4" cy="5.500" r="4.500" fill="#5d5d5d"/><circle cx="1305" cy="5.500" r="4.500" fill="#5d5d5d"/>
            <g text-anchor="middle">${range(-5, 28).map((i) => svg`<text x=${221.3 + i * 38.42 - (i < 0 ? 2.7 : 0)} y="10">${i * 10}</text>`)}</g></svg></div></div>
          <div class="bar low">
            ${hatch("bl")}${this.sel("clock", "ml9")}
            <span class="ml12 w45">View</span><span class="w55">Marker</span><span class="w52">Frame</span><span class="w58">Playback</span>
            <div class="b l w20 c">${icon("clockpie")}</div><div class="b r w20 c">${icon("lock")}</div>
            ${num("Start:", "1", "l w117 ml5")}${num("End:", "250", "r w111")}
            ${num("", "1", "w90 ml5")}
            <span class="ml15"></span><div class="b l w20 c">${icon("first")}</div>${["prev", "back", "play", "next"].map((n) => html`<div class="b m w20 c">${icon(n)}</div>`)}<div class="b r w20 c">${icon("last")}</div>
            <div class="d w115 ml5 txt">No Sync${updown()}</div>
            <div class="b w20 ml16 c">${icon("record")}</div>
            <div class="d w35 ml5"><span class="ml3"></span>${icon("diamond")}${updown()}</div>
            <div class="f l w131 ml5"><span class="ml3"></span>${icon("keyset")}</div><div class="b m w20 c">${icon("key")}</div><div class="b r w20 c">${icon("keydel")}</div>
          </div>
        </div>
        <div class="right">
          <div class="bar">
            ${this.sel("outliner", "ml9")}<span class="ml12 w45">View</span><span class="w47">Search</span>
            <div class="d w119 txt">All Scenes${updown()}</div><div class="f w111 ml5"><span class="ml3"></span>${icon("lens")}</div>${hatch("tr0")}
          </div>
          <div class="tree">
            <svg class="trunk" width="60" height="140"><path d="M14 10.500h10M27.500 18v110M30 70.500h14M30 90.500h14M30 110.500h14M30 130.500h14" stroke="#4e4e4e"/></svg>
            <div class="rows">
              <div class="tn root"><span class="w3"></span>${this.pm(false)}<span class="w9"></span>${icon("scene", "halo")}<span class="ml3">Scene</span></div>
              <div class="tn"><span class="w28"></span>${this.pm(true)}<span class="w4"></span>${icon("layers")}<span class="ml3">RenderLayers</span><span class="bar1"></span><span class="w9"></span>${icon("layers", "halo")}</div>
              <div class="tn"><span class="w42"></span>${icon("world", "halo")}<span class="ml3">World</span></div>
              ${this.node("A_profilo_naca_flap.VERIFICA")}${this.node("A_profilo_naca_flap.VERIFICA.001")}${this.node("A_profilo_naca_wing")}${this.node("A_profilo_naca_wing.003", true)}
            </div>
            <div class="cols">${range(1, 4).map(() => html`${icon("eye")}${icon("pointer")}${icon("camera")}`)}</div>
            ${hatch("bl")}
          </div>
          <div class="bar phead">
            ${this.sel("props", "ml9")}
            <div class="d l w20 ml8 sel">${icon("camera")}</div>${["layers", "scene", "world", "cube", "chain", "wrench", "mesh", "material", "texture", "particles"].map((n) => html`<div class="d m w20 dim">${icon(n)}</div>`)}<div class="d r w20 dim">${icon("physics")}</div>
            ${hatch("tr0")}
          </div>
          <div class="props">
            <div class="pc">
              <div class="pin"><span class="w2"></span>${icon("pin")}<span class="w7"></span>${icon("scene")}<span class="ml3">Scene</span></div>
              <div class="sep nogap"></div>
              ${this.header("Render")}
              <div class="row gap7"><div class="b l w122"><span class="ml3"></span>${icon("camerastar")}<span class="tt">Render</span></div><div class="b m w122"><span class="ml3"></span>${icon("clapper")}<span class="tt">Animation</span></div><div class="b r w122"><span class="ml3"></span>${icon("speaker")}<span class="tt">Audio</span></div></div>
              <div class="row gap5"><span class="lab w126">Display:</span><div class="d l w220 txt">Image Editor${updown()}</div><div class="b r w20 c">${icon("unlock")}</div></div>
              <div class="sep"></div>
              ${this.header("Dimensions")}
              <div class="row gap6"><div class="d l w326 txt">Render Presets${updown()}</div><div class="b m w20 c">${icon("plus")}</div><div class="b r w20 c">${icon("minus")}</div></div>
              <div class="row gap5"><span class="lab w187">Resolution:</span><span class="lab">Frame Range:</span></div>
              <div class="two"><div class="nums w179">${num("X:", "1920 px", "")}${num("Y:", "1080 px", "")}<div class="f n slider">50%</div></div>
                <div class="nums w179">${num("Start Frame:", "1", "")}${num("End Frame:", "250", "")}${num("Frame Step:", "1", "")}</div></div>
              <div class="row"><span class="lab w187">Aspect Ratio:</span><span class="lab">Frame Rate:</span></div>
              <div class="two">${num("X:", "1.000", "w179")}<div class="d w179 txt">24 fps${updown()}</div></div>
            </div>
            <div class="sb"><div class="th"></div></div>
            ${hatch("bl")}
          </div>
        </div>
      </div>
    </div>`;
  }
}
